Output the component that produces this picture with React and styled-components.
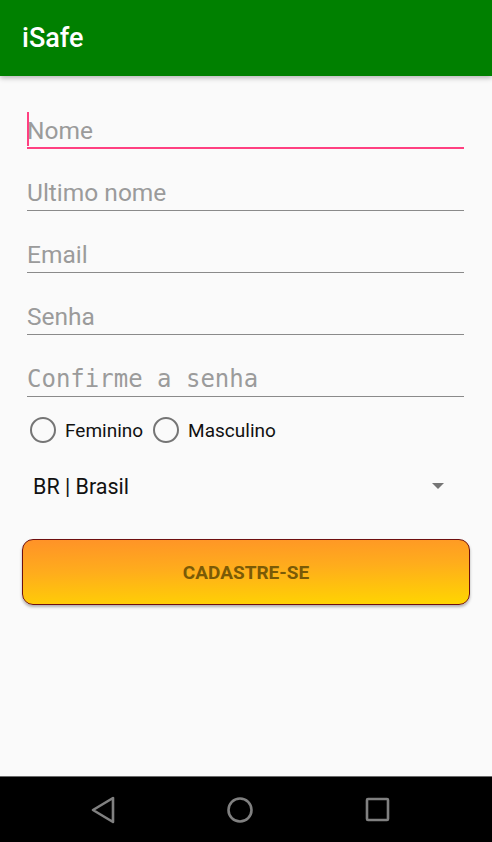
import React from 'react';
import styled, { createGlobalStyle } from 'styled-components';

const GlobalStyle = createGlobalStyle`
    html, body {
        margin: 0;
        padding: 0;
        background: #fafafa;
        font-family: Roboto, 'Noto Sans', sans-serif;
    }
    * {
        box-sizing: border-box;
    }
`;

const Screen = styled.div`
    display: flex;
    flex-direction: column;
    width: 492px;
    height: 842px;
    background: #fafafa;
    overflow: hidden;
`;

const AppBar = styled.header`
    position: relative;
    z-index: 2;
    display: flex;
    align-items: center;
    flex-shrink: 0;
    height: 76px;
    padding-left: 22px;
    background: #008000;
    box-shadow: 0 2px 5px rgba(0, 0, 0, 0.28);
`;

const Title = styled.h1`
    margin: 0;
    color: #ffffff;
    font-size: 27px;
    font-weight: 500;
    line-height: 1;
`;

const Form = styled.main`
    flex: 1;
    display: flex;
    flex-direction: column;
    padding: 11px 28px 0 27px;
`;

const Field = styled.div`
    position: relative;
    display: flex;
    align-items: flex-end;
    height: 62px;
    padding-bottom: ${props => (props.focused ? '1px' : '2px')};
    border-bottom: ${props => (props.focused ? '2px solid #ff4081' : '1px solid #8a8a8a')};
`;

const Input = styled.input`
    width: 100%;
    height: 30px;
    padding: 0;
    border: none;
    outline: none;
    background: transparent;
    font-family: ${props => (props.mono ? "'DejaVu Sans Mono', 'Liberation Mono', monospace" : "Roboto, sans-serif")};
    font-size: ${props => (props.mono ? '24px' : '24.5px')};
    line-height: 30px;
    color: #212121;

    &::placeholder {
        color: #9b9b9b;
        opacity: 1;
    }
`;

const Caret = styled.span`
    position: absolute;
    left: 0;
    bottom: 1px;
    width: 2px;
    height: 34px;
    background: #ff4081;
`;

const RadioRow = styled.div`
    display: flex;
    align-items: center;
    height: 26px;
    margin: 20px 0 0 3px;
`;

const RadioOption = styled.label`
    display: flex;
    align-items: center;
    gap: 9px;
    margin-right: 10px;
    font-size: 19px;
    color: #111111;
`;

const RadioCircle = styled.span`
    display: block;
    width: 26px;
    height: 26px;
    border: 2.5px solid #757575;
    border-radius: 50%;
`;

const Spinner = styled.div`
    display: flex;
    align-items: center;
    justify-content: space-between;
    height: 48px;
    margin-top: 19px;
    padding: 0 20px 0 6px;
    font-size: 21.5px;
    color: #111111;
`;

const Arrow = styled.span`
    width: 0;
    height: 0;
    border-left: 6.5px solid transparent;
    border-right: 6.5px solid transparent;
    border-top: 6.5px solid #757575;
`;

const SignUpButton = styled.button`
    height: 66px;
    margin: 29px -6px 0 -5px;
    border: 1px solid #6e0f0f;
    border-radius: 11px;
    background: linear-gradient(178.5deg, #ff9228 0%, #ffad1c 45%, #ffd600 100%);
    box-shadow: 0 2px 3px rgba(0, 0, 0, 0.3);
    font-family: Roboto, sans-serif;
    font-size: 19px;
    font-weight: 700;
    color: #7b5a06;
    text-transform: uppercase;
`;

const NavBar = styled.nav`
    display: flex;
    align-items: center;
    flex-shrink: 0;
    height: 66px;
    padding-left: 34px;
    background: #000000;
    border-top: 1px solid #6a6a6a;
`;

const NavSlot = styled.div`
    display: flex;
    align-items: center;
    justify-content: center;
    width: 137.5px;
`;

const NavIcon = ({ children, w = 28, h = 30 }) => (
    <svg width={w} height={h} viewBox={`0 0 ${w} ${h}`} fill="none" stroke="#808080" strokeWidth="2.6" strokeLinejoin="round">
        {children}
    </svg>
);

const fields = [
    { placeholder: 'Nome', focused: true },
    { placeholder: 'Ultimo nome' },
    { placeholder: 'Email' },
    { placeholder: 'Senha' },
    { placeholder: 'Confirme a senha', mono: true },
];

const App = () => (
    <Screen>
        <GlobalStyle />
        <AppBar>
            <Title>iSafe</Title>
        </AppBar>
        <Form>
            {fields.map(f => (
                <Field key={f.placeholder} focused={f.focused}>
                    {f.focused && <Caret />}
                    <Input readOnly placeholder={f.placeholder} mono={f.mono} />
                </Field>
            ))}
            <RadioRow>
                <RadioOption>
                    <RadioCircle />
                    Feminino
                </RadioOption>
                <RadioOption>
                    <RadioCircle />
                    Masculino
                </RadioOption>
            </RadioRow>
            <Spinner>
                <span>BR | Brasil</span>
                <Arrow />
            </Spinner>
            <SignUpButton>Cadastre-se</SignUpButton>
        </Form>
        <NavBar>
            <NavSlot>
                <NavIcon w={28} h={30}>
                    <polygon points="4,15 24,3 24,27" />
                </NavIcon>
            </NavSlot>
            <NavSlot>
                <NavIcon w={28} h={28}>
                    <circle cx="14" cy="14" r="11.5" />
                </NavIcon>
            </NavSlot>
            <NavSlot>
                <NavIcon w={26} h={26}>
                    <rect x="2" y="2" width="21" height="21" rx="1" />
                </NavIcon>
            </NavSlot>
        </NavBar>
    </Screen>
);

export default App;
